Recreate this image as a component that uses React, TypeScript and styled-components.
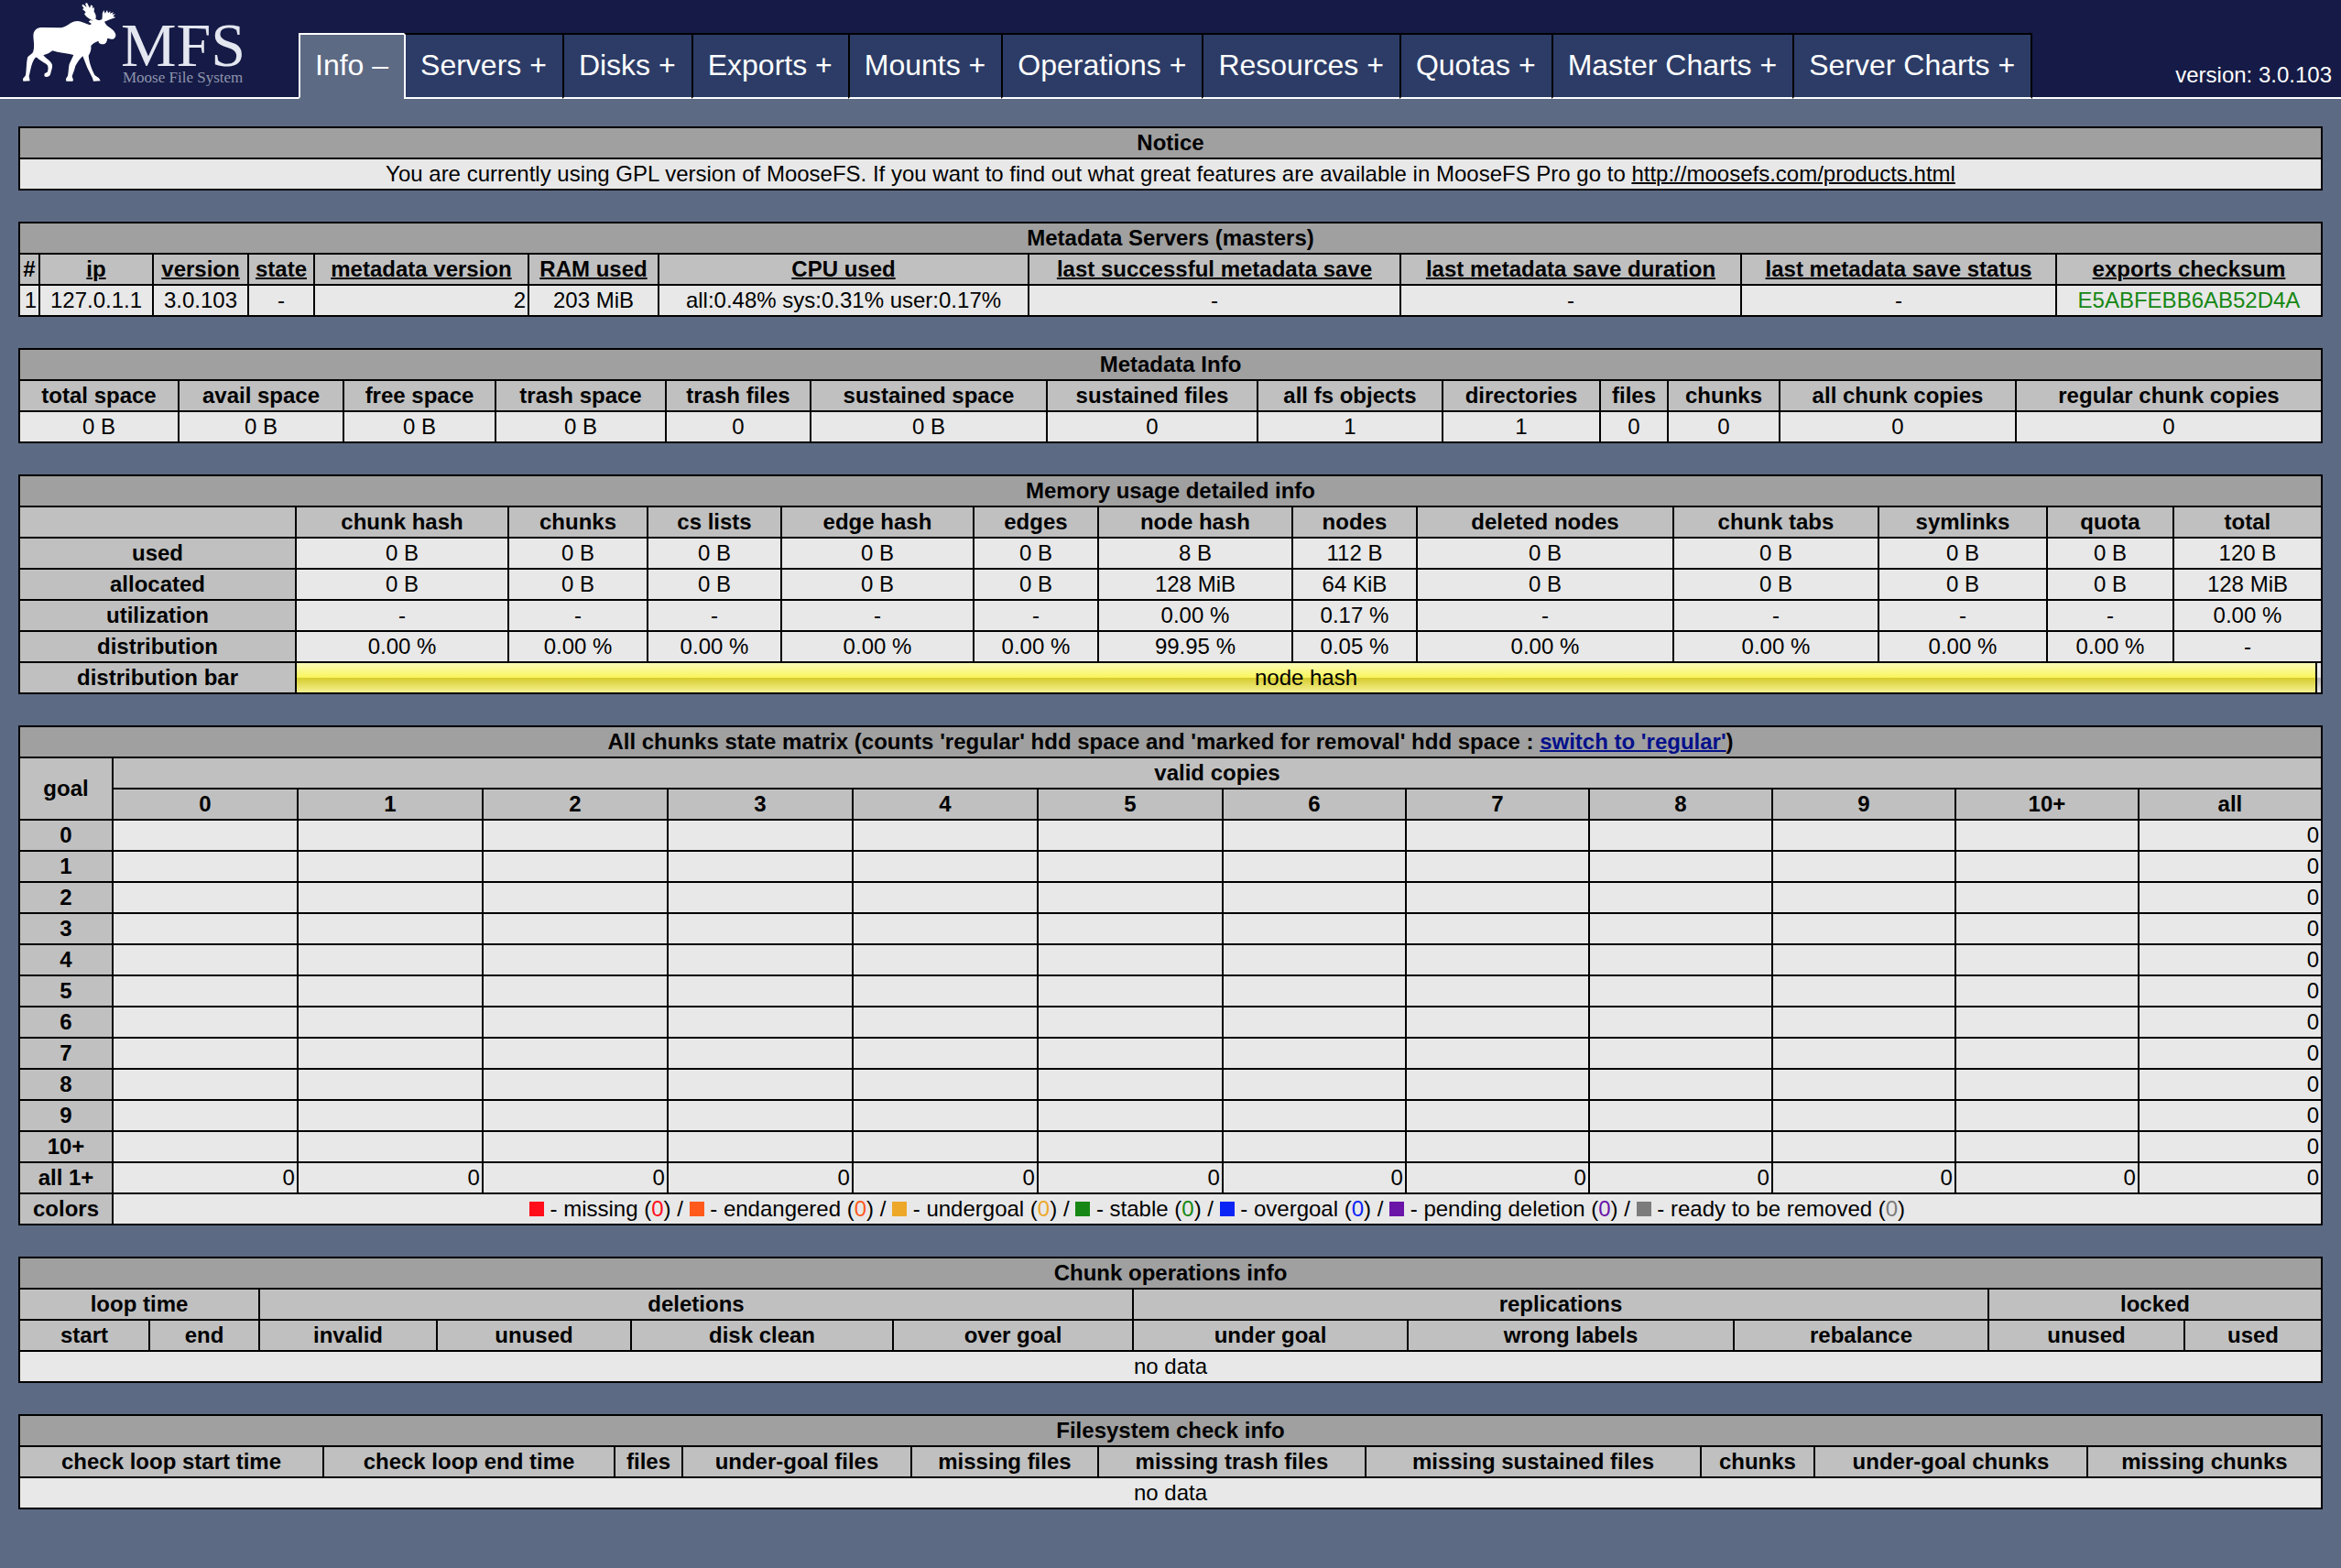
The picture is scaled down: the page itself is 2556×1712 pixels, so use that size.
import React from "react";
import styled, { createGlobalStyle } from "styled-components";

const color = {
  header: "#151b46",
  tab: "#2c3c67",
  page: "#5d6a84",
  title: "#a0a0a0",
  head: "#c0c0c0",
  cell: "#e8e8e8",
  line: "#000000",
  link: "#04108b",
};

const GlobalStyle = createGlobalStyle`
  *, *::before, *::after { box-sizing: border-box; }
  html { background: ${color.page}; }
  body {
    margin: 0;
    background: ${color.page};
    color: #000;
    font-family: "Liberation Sans", Arial, Helvetica, sans-serif;
    font-size: 24px;
    line-height: 32px;
  }
`;

/* ---------- header ---------- */

const Header = styled.header`
  display: flex;
  background: ${color.header};
  color: #fff;
`;

const LogoLink = styled.a`
  flex: none;
  display: block;
  width: 326px;
  height: 108px;
  padding-left: 20px;
  border-bottom: 2px solid #fff;
`;

const LogoArt = styled.svg`
  display: block;
  width: 256px;
  height: 100px;
`;

const Nav = styled.nav`
  display: flex;
`;

const TabList = styled.ul`
  display: flex;
  margin: 36px 0 0;
  padding: 0;
  list-style: none;
`;

const TabItem = styled.li<{ $active?: boolean }>`
  display: flex;
  border-style: solid;
  border-width: 2px 0 2px 2px;
  border-color: ${(p) => (p.$active ? "#fff" : color.line)};
  border-bottom-color: ${(p) => (p.$active ? color.page : "#fff")};
  background: ${(p) => (p.$active ? color.page : color.tab)};

  &:last-child {
    border-right-width: 2px;
  }

  ${(p) => p.$active && "& + li { border-left-color: #fff; }"}
`;

const TabLink = styled.a`
  padding: 13px 17px 0 16px;
  color: #fff;
  font-size: 32px;
  line-height: 40px;
  white-space: nowrap;
  text-decoration: none;
`;

const Version = styled.div`
  flex: 1;
  padding: 66px 10px 0 0;
  border-bottom: 2px solid #fff;
  text-align: right;
  white-space: nowrap;
`;

/* ---------- tables ---------- */

const Main = styled.main`
  display: flex;
  flex-direction: column;
  gap: 34px;
  padding: 30px 20px 60px;
`;

const Table = styled.table`
  width: 100%;
  table-layout: fixed;
  border-collapse: collapse;
`;

const Col = styled.col<{ $share: number }>`
  width: ${(p) => p.$share}%;
`;

const Row = styled.tr`
  height: 34px;
`;

const Title = styled.th`
  padding: 0 2px;
  border: 2px solid ${color.line};
  background: ${color.title};
`;

const Head = styled.th`
  padding: 0 2px;
  border: 2px solid ${color.line};
  background: ${color.head};
  white-space: nowrap;
`;

const Cell = styled.td<{ $align?: "right" }>`
  padding: 0 2px;
  border: 2px solid ${color.line};
  background: ${color.cell};
  text-align: ${(p) => p.$align ?? "center"};
  white-space: nowrap;
`;

const BarCell = styled.td`
  padding: 0;
  border: 2px solid ${color.line};
  background: ${color.cell};
`;

const Link = styled.a<{ $tone?: string }>`
  color: ${(p) => p.$tone ?? "#000"};
  text-decoration: underline;
  text-decoration-thickness: 2px;
`;

const Tint = styled.span<{ $tone: string }>`
  color: ${(p) => p.$tone};
`;

const Swatch = styled.span<{ $tone: string }>`
  display: inline-block;
  width: 16px;
  height: 16px;
  background: ${(p) => p.$tone};
`;

const Bar = styled.div`
  display: flex;
  height: 32px;
`;

const BarMain = styled.div`
  flex: 1;
  border-right: 2px solid ${color.line};
  background: linear-gradient(#fbfbba, #f9f55a 50%, #d6cb2c 50%, #f5f292);
  text-align: center;
`;

const BarRest = styled.div`
  width: 4px;
  background: linear-gradient(#f0f0f0, #e8e8e8 50%, #b4b4b4 50%, #e8e8e8);
`;

type PanelProps = {
  title: React.ReactNode;
  widths: number[];
  children: React.ReactNode;
};

/* Column widths are relative weights; the table itself follows the window. */
function Panel({ title, widths, children }: PanelProps) {
  const total = widths.reduce((a, b) => a + b, 0);
  return (
    <Table>
      <colgroup>
        {widths.map((w, i) => (
          <Col key={i} $share={(w * 100) / total} />
        ))}
      </colgroup>
      <thead>
        <Row>
          <Title colSpan={widths.length}>{title}</Title>
        </Row>
      </thead>
      <tbody>{children}</tbody>
    </Table>
  );
}

function HeadRow({ labels }: { labels: string[] }) {
  return (
    <Row>
      {labels.map((l, i) => (
        <Head key={i} scope="col">
          {l}
        </Head>
      ))}
    </Row>
  );
}

/* ---------- data ---------- */

const tabs = [
  "Servers +",
  "Disks +",
  "Exports +",
  "Mounts +",
  "Operations +",
  "Resources +",
  "Quotas +",
  "Master Charts +",
  "Server Charts +",
];

const masterHeads = [
  "ip",
  "version",
  "state",
  "metadata version",
  "RAM used",
  "CPU used",
  "last successful metadata save",
  "last metadata save duration",
  "last metadata save status",
  "exports checksum",
];

const infoHeads = [
  "total space",
  "avail space",
  "free space",
  "trash space",
  "trash files",
  "sustained space",
  "sustained files",
  "all fs objects",
  "directories",
  "files",
  "chunks",
  "all chunk copies",
  "regular chunk copies",
];
const infoValues = ["0 B", "0 B", "0 B", "0 B", "0", "0 B", "0", "1", "1", "0", "0", "0", "0"];

const memoryHeads = [
  "",
  "chunk hash",
  "chunks",
  "cs lists",
  "edge hash",
  "edges",
  "node hash",
  "nodes",
  "deleted nodes",
  "chunk tabs",
  "symlinks",
  "quota",
  "total",
];
const memoryRows: [string, string[]][] = [
  ["used", ["0 B", "0 B", "0 B", "0 B", "0 B", "8 B", "112 B", "0 B", "0 B", "0 B", "0 B", "120 B"]],
  ["allocated", ["0 B", "0 B", "0 B", "0 B", "0 B", "128 MiB", "64 KiB", "0 B", "0 B", "0 B", "0 B", "128 MiB"]],
  ["utilization", ["-", "-", "-", "-", "-", "0.00 %", "0.17 %", "-", "-", "-", "-", "0.00 %"]],
  [
    "distribution",
    ["0.00 %", "0.00 %", "0.00 %", "0.00 %", "0.00 %", "99.95 %", "0.05 %", "0.00 %", "0.00 %", "0.00 %", "0.00 %", "-"],
  ],
];

const copies = ["0", "1", "2", "3", "4", "5", "6", "7", "8", "9", "10+"];

const legend: [string, string][] = [
  ["missing", "#ff0d1b"],
  ["endangered", "#ff5a1c"],
  ["undergoal", "#eda829"],
  ["stable", "#168714"],
  ["overgoal", "#0a24f5"],
  ["pending deletion", "#6a14a8"],
  ["ready to be removed", "#7c7c7c"],
];

const operationHeads = [
  "start",
  "end",
  "invalid",
  "unused",
  "disk clean",
  "over goal",
  "under goal",
  "wrong labels",
  "rebalance",
  "unused",
  "used",
];

const checkHeads = [
  "check loop start time",
  "check loop end time",
  "files",
  "under-goal files",
  "missing files",
  "missing trash files",
  "missing sustained files",
  "chunks",
  "under-goal chunks",
  "missing chunks",
];

/* ---------- page ---------- */

function Logo() {
  return (
    <LogoArt viewBox="0 0 256 100" role="img" aria-label="MFS Moose File System">
      <g transform="scale(0.33333)">
        <path
          fill="#fff"
          d="M50 130 C49 116 48 106 56 98 C62 91 70 90 80 90 L140 91 C152 89 162 82 172 75 C184 68 196 67 208 72 L234 82
             L240 78 L230 71 L236 66 L246 68 C236 64 224 58 216 46 L221 40 L210 30 L215 27 L208 18 L212 14 L224 24
             L219 12 L225 9 L234 26 L238 16 L244 20 L243 28 L249 24 L248 38 C254 46 256 54 253 62 L263 67 L274 64
             C275 56 276 50 275 45 L280 33 L284 44 L291 33 L294 43 L302 36 L300 44 L312 40 L307 47 L318 46 L310 53
             L319 57 L300 64 L282 71 C286 79 290 84 298 89 C308 95 317 103 319 113 C320 122 313 130 304 128
             L292 125 C291 132 289 138 286 141 C280 148 270 145 264 140 L262 134 C254 137 244 142 238 150
             C240 162 236 172 230 182 C232 206 242 230 251 247 L264 256 L269 265 L246 266 L243 256 L226 222 L211 184
             C202 192 194 204 187 216 C184 230 179 240 176 250 L180 262 L178 266 L157 266 L156 258 L162 248
             C165 234 164 222 167 210 L181 180 C166 174 144 174 128 170 L112 166 C104 172 94 178 82 181
             C90 192 106 198 111 212 C113 222 107 232 105 244 C101 253 90 254 85 249 L86 241 L95 236
             C98 228 99 220 95 213 C86 204 72 200 61 188 L56 188 C48 198 43 212 40 228 L35 250 L38 265 L16 266
             L15 258 L24 247 C27 228 26 206 30 188 C36 180 46 178 49 168 C53 156 51 142 50 130 Z"
        />
      </g>
      <text x="112" y="72" fill="#e4e6f0" fontFamily="Liberation Serif, Times New Roman, serif" fontSize="68">
        MFS
      </text>
      <text x="114" y="90" fill="#8f94ad" fontFamily="Liberation Serif, Times New Roman, serif" fontSize="17">
        Moose File System
      </text>
    </LogoArt>
  );
}

export default function App() {
  return (
    <>
      <GlobalStyle />
      <Header>
        <LogoLink href="#home">
          <Logo />
        </LogoLink>
        <Nav>
          <TabList>
            <TabItem $active>
              <TabLink href="#info" aria-current="page">
                Info –
              </TabLink>
            </TabItem>
            {tabs.map((t) => (
              <TabItem key={t}>
                <TabLink href="#tab">{t}</TabLink>
              </TabItem>
            ))}
          </TabList>
        </Nav>
        <Version>version: 3.0.103</Version>
      </Header>

      <Main>
        <Panel title="Notice" widths={[1]}>
          <Row>
            <Cell>
              You are currently using GPL version of MooseFS. If you want to find out what great features are available in
              MooseFS Pro go to <Link href="#products">http://moosefs.com/products.html</Link>
            </Cell>
          </Row>
        </Panel>

        <Panel title="Metadata Servers (masters)" widths={[22, 124, 104, 72, 234, 142, 404, 406, 372, 344, 290]}>
          <Row>
            <Head scope="col">#</Head>
            {masterHeads.map((h) => (
              <Head key={h} scope="col">
                <Link href="#sort">{h}</Link>
              </Head>
            ))}
          </Row>
          <Row>
            <Cell $align="right">1</Cell>
            <Cell>127.0.1.1</Cell>
            <Cell>3.0.103</Cell>
            <Cell>-</Cell>
            <Cell $align="right">2</Cell>
            <Cell>203 MiB</Cell>
            <Cell>all:0.48% sys:0.31% user:0.17%</Cell>
            <Cell>-</Cell>
            <Cell>-</Cell>
            <Cell>-</Cell>
            <Cell>
              <Tint $tone="#168714">E5ABFEBB6AB52D4A</Tint>
            </Cell>
          </Row>
        </Panel>

        <Panel title="Metadata Info" widths={[174, 180, 166, 186, 158, 258, 230, 202, 172, 74, 122, 258, 334]}>
          <HeadRow labels={infoHeads} />
          <Row>
            {infoValues.map((v, i) => (
              <Cell key={i}>{v}</Cell>
            ))}
          </Row>
        </Panel>

        <Panel
          title="Memory usage detailed info"
          widths={[302, 232, 152, 146, 210, 136, 212, 136, 280, 224, 184, 138, 162]}
        >
          <HeadRow labels={memoryHeads} />
          {memoryRows.map(([label, values]) => (
            <Row key={label}>
              <Head scope="row">{label}</Head>
              {values.map((v, i) => (
                <Cell key={i}>{v}</Cell>
              ))}
            </Row>
          ))}
          <Row>
            <Head scope="row">distribution bar</Head>
            <BarCell colSpan={12}>
              <Bar>
                <BarMain>node hash</BarMain>
                <BarRest />
              </Bar>
            </BarCell>
          </Row>
        </Panel>

        <Panel
          title={
            <>
              All chunks state matrix (counts 'regular' hdd space and 'marked for removal' hdd space :{" "}
              <Link href="#regular" $tone={color.link}>
                switch to 'regular'
              </Link>
              )
            </>
          }
          widths={[102, 202, 202, 202, 202, 202, 202, 200, 200, 200, 200, 200, 200]}
        >
          <Row>
            <Head rowSpan={2}>goal</Head>
            <Head colSpan={12}>valid copies</Head>
          </Row>
          <HeadRow labels={[...copies, "all"]} />
          {copies.map((goal) => (
            <Row key={goal}>
              <Head scope="row">{goal}</Head>
              {copies.map((c) => (
                <Cell key={c} />
              ))}
              <Cell $align="right">0</Cell>
            </Row>
          ))}
          <Row>
            <Head scope="row">all 1+</Head>
            {[...copies, "all"].map((c) => (
              <Cell key={c} $align="right">
                0
              </Cell>
            ))}
          </Row>
          <Row>
            <Head scope="row">colors</Head>
            <Cell colSpan={12}>
              {legend.map(([name, tone], i) => (
                <React.Fragment key={name}>
                  {i > 0 && " / "}
                  <Swatch $tone={tone} /> - {name} (<Tint $tone={tone}>0</Tint>)
                </React.Fragment>
              ))}
            </Cell>
          </Row>
        </Panel>

        <Panel title="Chunk operations info" widths={[142, 120, 194, 212, 286, 262, 300, 356, 278, 214, 150]}>
          <Row>
            <Head colSpan={2}>loop time</Head>
            <Head colSpan={4}>deletions</Head>
            <Head colSpan={3}>replications</Head>
            <Head colSpan={2}>locked</Head>
          </Row>
          <HeadRow labels={operationHeads} />
          <Row>
            <Cell colSpan={11}>no data</Cell>
          </Row>
        </Panel>

        <Panel title="Filesystem check info" widths={[332, 318, 74, 250, 204, 292, 366, 124, 298, 256]}>
          <HeadRow labels={checkHeads} />
          <Row>
            <Cell colSpan={10}>no data</Cell>
          </Row>
        </Panel>
      </Main>
    </>
  );
}
